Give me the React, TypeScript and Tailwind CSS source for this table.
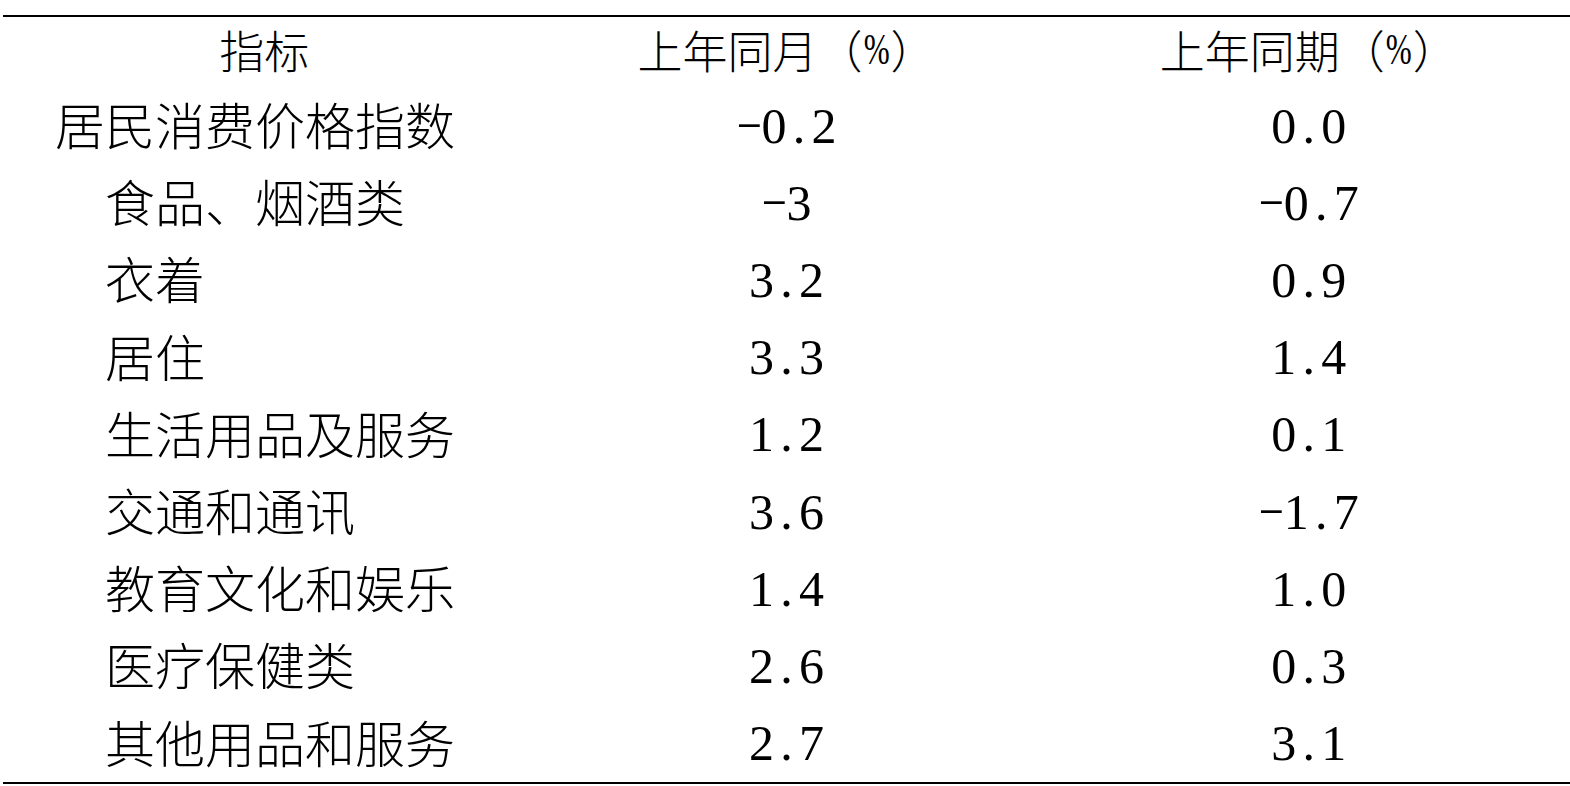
import React from "react"

const rows: { name: string; sub: boolean; month: string; period: string }[] = [
  { name: "居民消费价格指数", sub: false, month: "-0.2", period: "0.0" },
  { name: "食品、烟酒类", sub: true, month: "-3", period: "-0.7" },
  { name: "衣着", sub: true, month: "3.2", period: "0.9" },
  { name: "居住", sub: true, month: "3.3", period: "1.4" },
  { name: "生活用品及服务", sub: true, month: "1.2", period: "0.1" },
  { name: "交通和通讯", sub: true, month: "3.6", period: "-1.7" },
  { name: "教育文化和娱乐", sub: true, month: "1.4", period: "1.0" },
  { name: "医疗保健类", sub: true, month: "2.6", period: "0.3" },
  { name: "其他用品和服务", sub: true, month: "2.7", period: "3.1" },
]

// SimSun-style half-width figures: every char takes the same cell
function Num({ v }: { v: string }) {
  return (
    <span className="inline-flex font-['Liberation_Serif',serif] text-[50px] leading-none">
      {v.split("").map((c, i) => (
        <span key={i} className="inline-block w-[25px] text-center">
          {c === "-" ? (
            <span className="inline-block scale-x-[1.6] scale-y-[0.7] -translate-y-[4px]">-</span>
          ) : (
            c
          )}
        </span>
      ))}
    </span>
  )
}

function HeadLabel({ text }: { text: string }) {
  return (
    <span className="leading-none inline-flex items-center [text-spacing-trim:space-all]">
      <span>{text}</span>
      <span className="inline-block w-[45px]">（</span>
      <span className="inline-flex w-[28px] justify-center font-['Liberation_Serif',serif] text-[38px]">
        <span className="inline-block scale-x-[0.82] scale-y-[1.18] -translate-y-[1px]">%</span>
      </span>
      <span className="inline-block w-[45px]">）</span>
    </span>
  )
}

export default function App() {
  return (
    <div className="min-h-screen bg-white pt-[15px] pl-[3px] text-black font-['Noto_Sans_CJK_SC','Noto_Sans',sans-serif] font-light">
      <div className="border-t-2 border-b-2 border-black">
        {/* Header */}
        <div className="grid grid-cols-3 h-[70px] text-[45px] pb-[5px]">
          <div className="flex items-center justify-center leading-none">指标</div>
          <div className="flex items-center justify-center">
            <HeadLabel text="上年同月" />
          </div>
          <div className="flex items-center justify-center">
            <HeadLabel text="上年同期" />
          </div>
        </div>

        {/* Body */}
        {rows.map((r) => (
          <div key={r.name} className="grid grid-cols-3 h-[77.2px]">
            <div
              className={
                "flex items-center text-[50px] leading-none pb-[5px] [text-spacing-trim:space-all] " +
                (r.sub ? "pl-[102px]" : "pl-[52px]")
              }
            >
              {r.name}
            </div>
            <div className="flex items-center justify-center">
              <Num v={r.month} />
            </div>
            <div className="flex items-center justify-center">
              <Num v={r.period} />
            </div>
          </div>
        ))}
      </div>
    </div>
  )
}
